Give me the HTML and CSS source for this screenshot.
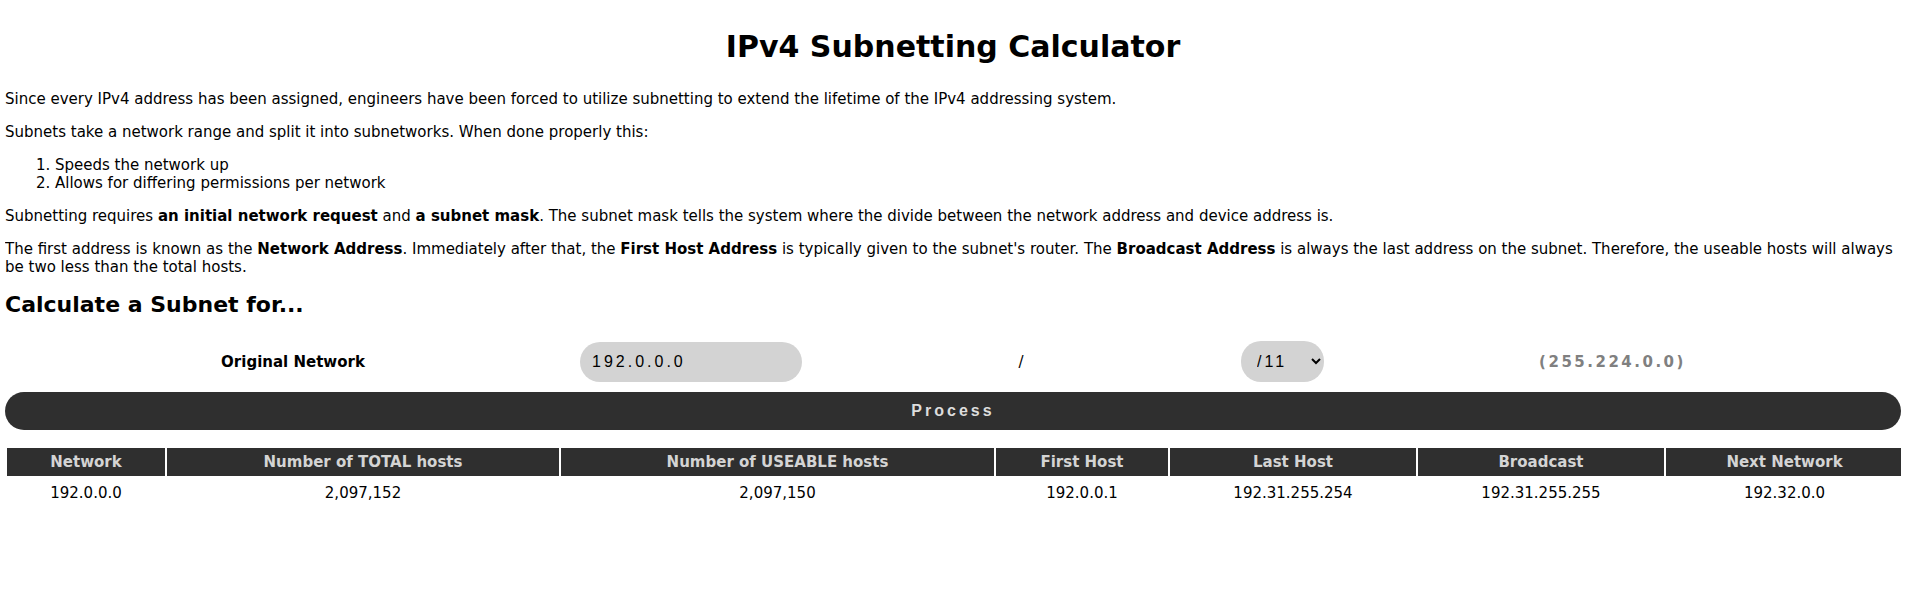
FILE: index.html
```html
<!DOCTYPE html>
<html lang="en">
<head>
<meta charset="utf-8">
<title>IPv4 Subnetting Calculator</title>
<link rel="stylesheet" href="styles.css">
</head>
<body>
<h1 class="title">IPv4 Subnetting Calculator</h1>
<p class="para">Since every IPv4 address has been assigned, engineers have been forced to utilize subnetting to extend the lifetime of the IPv4 addressing system.</p>
<p class="para">Subnets take a network range and split it into subnetworks. When done properly this:</p>
<ol class="list">
<li>Speeds the network up</li>
<li>Allows for differing permissions per network</li>
</ol>
<p class="para">Subnetting requires <b>an initial network request</b> and <b>a subnet mask</b>. The subnet mask tells the system where the divide between the network address and device address is.</p>
<p class="para">The first address is known as the <b>Network Address</b>. Immediately after that, the <b>First Host Address</b> is typically given to the subnet's router. The <b>Broadcast Address</b> is always the last address on the subnet. Therefore, the useable hosts will always be two less than the total hosts.</p>
<h2 class="subtitle">Calculate a Subnet for...</h2>
<div class="form-row">
  <div class="cell label">Original Network</div>
  <div class="cell"><input class="ip-input" type="text" value="192.0.0.0"></div>
  <div class="cell slash">/</div>
  <div class="cell"><select class="cidr"><option>/11</option></select></div>
  <div class="cell mask">(255.224.0.0)</div>
</div>
<button class="process">Process</button>
<table class="results">
  <colgroup>
    <col class="c1"><col class="c2"><col class="c3"><col class="c4"><col class="c5"><col class="c6"><col class="c7">
  </colgroup>
  <thead>
    <tr>
      <th>Network</th>
      <th>Number of TOTAL hosts</th>
      <th>Number of USEABLE hosts</th>
      <th>First Host</th>
      <th>Last Host</th>
      <th>Broadcast</th>
      <th>Next Network</th>
    </tr>
  </thead>
  <tbody>
    <tr>
      <td>192.0.0.0</td>
      <td>2,097,152</td>
      <td>2,097,150</td>
      <td>192.0.0.1</td>
      <td>192.31.255.254</td>
      <td>192.31.255.255</td>
      <td>192.32.0.0</td>
    </tr>
  </tbody>
</table>
</body>
</html>
```

FILE: styles.css
```css
html, body {
  background: #ffffff;
}
body {
  margin: 5px;
  font-family: "DejaVu Sans", Verdana, sans-serif;
  font-size: 15px;
  line-height: 18px;
  color: #000;
}
.title {
  font-size: 30px;
  line-height: 36px;
  text-align: center;
  margin: 24px 0 25px;
}
.para {
  margin: 15px 0;
}
.list {
  margin: 15px 0;
  padding-left: 50px;
}
.subtitle {
  font-size: 22px;
  line-height: 26px;
  margin: 16px 0 23px;
}
.form-row {
  display: grid;
  grid-template-columns: 576px 220px 440px 83px 1fr;
  align-items: center;
  height: 41px;
}
.cell {
  display: flex;
  justify-content: center;
  align-items: center;
}
.label {
  font-weight: bold;
}
.ip-input {
  box-sizing: border-box;
  width: 222px;
  height: 40px;
  border: none;
  border-radius: 20px;
  background: #d3d3d3;
  padding: 0 12px;
  font-family: "Liberation Sans", Arial, sans-serif;
  font-size: 16px;
  letter-spacing: 3px;
  color: #000;
  outline: none;
}
.cidr {
  box-sizing: border-box;
  width: 83px;
  height: 41px;
  border: none;
  border-radius: 20px;
  background: #d3d3d3;
  padding: 0 8px 0 12px;
  font-family: "Liberation Sans", Arial, sans-serif;
  font-size: 16px;
  letter-spacing: 3px;
  color: #000;
}
.mask {
  font-weight: bold;
  color: #808080;
  font-size: 15px;
  letter-spacing: 2.5px;
}
.process {
  display: block;
  width: 100%;
  height: 38px;
  margin-top: 10px;
  border: none;
  border-radius: 19px;
  background: #2f2f2f;
  color: #dddddd;
  font-family: "Liberation Sans", Arial, sans-serif;
  font-weight: bold;
  font-size: 16px;
  letter-spacing: 3px;
}
.results {
  width: 100%;
  margin-top: 16px;
  border-spacing: 2px;
  table-layout: fixed;
}
.results th {
  background: #2f2f2f;
  color: #d4d4d4;
  font-weight: bold;
  height: 28px;
  padding: 0;
}
.results td {
  text-align: center;
  padding: 6px 0;
}
.c1 { width: 158px; }
.c2 { width: 392px; }
.c3 { width: 433px; }
.c4 { width: 172px; }
.c5 { width: 246px; }
.c6 { width: 246px; }
.c7 { width: 237px; }
```
